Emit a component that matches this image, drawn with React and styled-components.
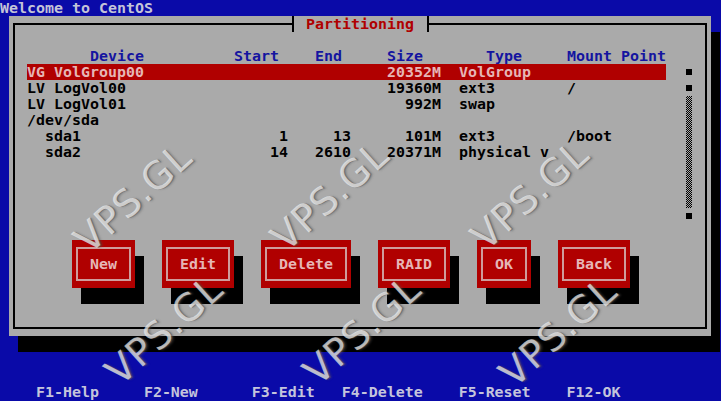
import React from 'react';
import styled, { createGlobalStyle } from 'styled-components';

const BLUE = '#0a0aa8';
const GRAY = '#aaaaaa';
const RED = '#b00000';

const GlobalStyle = createGlobalStyle`
  html, body {
    margin: 0;
    padding: 0;
    background: ${BLUE};
  }
`;

const rows = [
  { name: 'VG VolGroup00', size: '20352M', type: 'VolGroup', selected: true },
  { name: 'LV LogVol00', size: '19360M', type: 'ext3', mount: '/' },
  { name: 'LV LogVol01', size: '992M', type: 'swap' },
  { name: '/dev/sda' },
  { name: 'sda1', indent: 2, start: '1', end: '13', size: '101M', type: 'ext3', mount: '/boot' },
  { name: 'sda2', indent: 2, start: '14', end: '2610', size: '20371M', type: 'physical v' },
];

const buttons = ['New', 'Edit', 'Delete', 'RAID', 'OK', 'Back'];

const marks = [
  { x: 133, y: 198 },
  { x: 330, y: 196 },
  { x: 530, y: 195 },
  { x: 164, y: 330 },
  { x: 362, y: 330 },
  { x: 558, y: 332 },
];

const App = () => {
  return (
    <>
      <GlobalStyle />
      <Screen>
        <RootLine>Welcome to CentOS</RootLine>
        <WindowArea>
          <Window>
            <Frame>
              <Title>Partitioning</Title>
              <ListHeader>
                <Cell $pad={7}>Device</Cell>
                <Cell>Start</Cell>
                <Cell $pad={3}>End</Cell>
                <Cell $pad={4}>Size</Cell>
                <Cell $pad={5}>Type</Cell>
                <Cell>Mount Point</Cell>
              </ListHeader>
              <ListBody>
                <Rows>
                  {rows.map((r) => (
                    <Row key={r.name} $selected={r.selected}>
                      <Cell $pad={r.indent || 0}>{r.name}</Cell>
                      <Cell $right>{r.start}</Cell>
                      <Cell $right>{r.end}</Cell>
                      <Cell $right>{r.size}</Cell>
                      <Cell $pad={2}>{r.type}</Cell>
                      <Cell>{r.mount}</Cell>
                    </Row>
                  ))}
                </Rows>
                <Scrollbar>
                  <Block />
                  <Block />
                  <Track />
                  <Block />
                </Scrollbar>
              </ListBody>
              <ButtonRow>
                {buttons.map((b) => (
                  <Button key={b} $chars={b.length + 4}>
                    <ButtonFace>{b}</ButtonFace>
                  </Button>
                ))}
              </ButtonRow>
            </Frame>
          </Window>
        </WindowArea>
        <HelpLine>{'    F1-Help     F2-New      F3-Edit   F4-Delete    F5-Reset    F12-OK'}</HelpLine>
        {marks.map((m, i) => (
          <Watermark key={i} style={{ left: m.x, top: m.y }}>
            VPS.GL
          </Watermark>
        ))}
      </Screen>
    </>
  );
};

const Screen = styled.div`
  position: relative;
  width: 721px;
  height: 400px;
  overflow: hidden;
  background: ${BLUE};
  font-family: 'DejaVu Sans Mono', 'Liberation Mono', monospace;
  font-weight: bold;
  font-size: 14.95px;
  line-height: 16px;
  display: flex;
  flex-direction: column;
`;

const RootLine = styled.div`
  height: 16px;
  color: #c4c4d8;
  white-space: pre;
`;

const WindowArea = styled.div`
  padding-left: 9px;
`;

const Window = styled.div`
  box-sizing: border-box;
  width: 702px;
  height: 320px;
  padding: 0 4px 7px;
  display: flex;
  background: ${GRAY};
  box-shadow: 9px 16px 0 #000;
`;

const Frame = styled.fieldset`
  flex: 1;
  min-width: 0;
  margin: 0;
  padding: 16px 0 0 12px;
  border: 2px solid #000;
  display: flex;
  flex-direction: column;
`;

const Title = styled.legend`
  height: 16px;
  margin-left: 265px;
  padding: 0 13px 0 12px;
  border-left: 2px solid #000;
  border-right: 2px solid #000;
  color: ${RED};
  line-height: 16px;
`;

const ListHeader = styled.div`
  display: grid;
  grid-template-columns: 207px 54px 63px 90px 126px 99px;
  height: 16px;
  color: #1414a0;
`;

const ListBody = styled.div`
  display: flex;
  gap: 18px;
  height: 160px;
`;

const Rows = styled.div`
  width: 639px;
  display: flex;
  flex-direction: column;
`;

const Row = styled.div`
  display: grid;
  grid-template-columns: 207px 54px 63px 90px 126px 99px;
  height: 16px;
  color: ${(p) => (p.$selected ? '#e6b6b6' : '#000')};
  background: ${(p) => (p.$selected ? RED : 'transparent')};
`;

const Cell = styled.span`
  white-space: pre;
  overflow: hidden;
  padding-left: ${(p) => (p.$pad || 0) * 9}px;
  text-align: ${(p) => (p.$right ? 'right' : 'left')};
`;

const Scrollbar = styled.div`
  width: 9px;
  display: flex;
  flex-direction: column;
  align-items: center;
`;

const Block = styled.div`
  width: 6px;
  height: 6px;
  margin: 5px 0;
  background: #000;
`;

const Track = styled.div`
  width: 6px;
  height: 112px;
  background: repeating-conic-gradient(#000 0 25%, transparent 0 50%) 0 0 / 2px 2px;
`;

const ButtonRow = styled.div`
  display: flex;
  gap: 27px;
  margin-top: 16px;
  padding-left: 45px;
`;

const Button = styled.div`
  box-sizing: border-box;
  width: ${(p) => p.$chars * 9}px;
  height: 48px;
  padding: 7px 4px;
  display: flex;
  background: ${RED};
  box-shadow: 9px 16px 0 #000;
`;

const ButtonFace = styled.div`
  flex: 1;
  display: flex;
  align-items: center;
  justify-content: center;
  border: 2px solid #cf9c9c;
  color: #e6b6b6;
`;

const HelpLine = styled.div`
  margin-top: auto;
  height: 16px;
  color: #c4c4dc;
  white-space: pre;
`;

const Watermark = styled.div`
  position: absolute;
  transform: translate(-50%, -50%) rotate(-42deg);
  font-family: 'DejaVu Sans', sans-serif;
  font-weight: normal;
  font-size: 38px;
  line-height: 1;
  letter-spacing: 1px;
  color: rgba(240, 240, 240, 0.72);
  text-shadow: 1px 1px 0 rgba(90, 90, 90, 0.5), 2px 2px 2px rgba(80, 80, 80, 0.35);
  white-space: nowrap;
  pointer-events: none;
`;

export default App;
